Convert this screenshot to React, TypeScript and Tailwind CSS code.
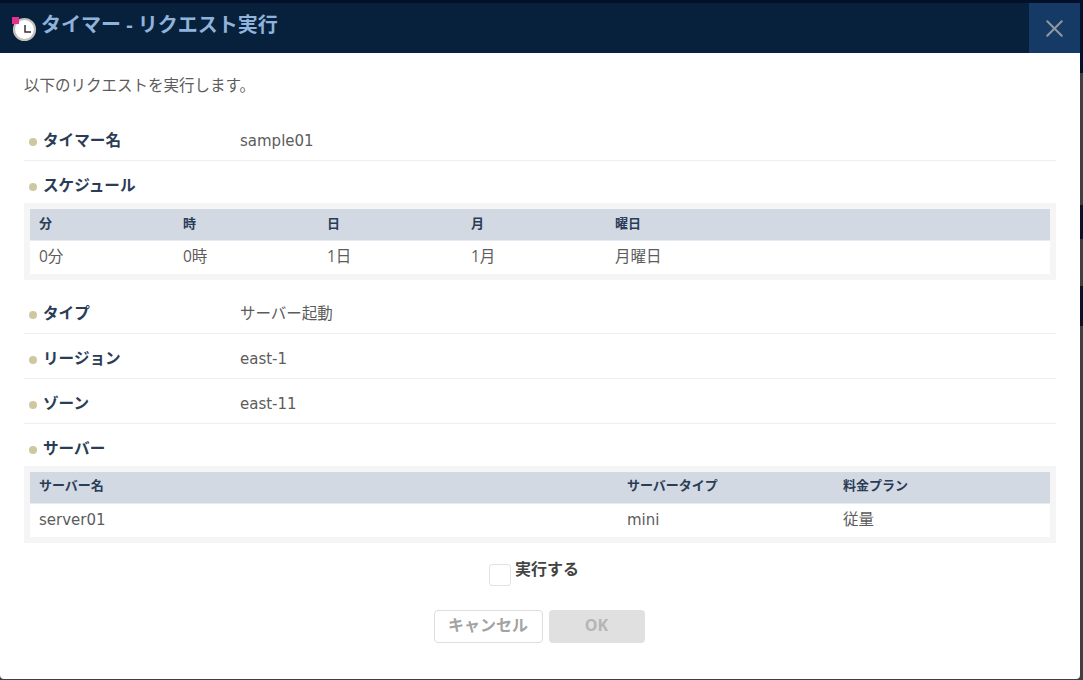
import { X } from "lucide-react";

const font = { fontFamily: '"Open Sans", "Noto Sans CJK JP", sans-serif' };
const wide = { fontFamily: '"DejaVu Sans", "Noto Sans CJK JP", sans-serif' };

function Label({ children }: { children: string }) {
  return (
    <div className="flex items-center text-[15.6px] font-bold text-[#2b3c56]">
      <span className="ml-[5px] mr-[6px] mt-[3px] h-[8px] w-[8px] rounded-full bg-[#cdc8a0]" />
      {children}
    </div>
  );
}

function Row({ label, value, latin }: { label: string; value: string; latin?: boolean }) {
  return (
    <div className="flex h-[45px] items-center border-b border-[#eeeeee] pt-[5px]">
      <div className="w-[216px]">
        <Label>{label}</Label>
      </div>
      {latin ? (
        <div className="pt-[2px] text-[15px] text-[#5c5c5c]" style={wide}>
          {value}
        </div>
      ) : (
        <div className="text-[15.5px] text-[#5c5c5c]">{value}</div>
      )}
    </div>
  );
}

function ClockIcon() {
  return (
    <svg width="25" height="25" viewBox="0 0 25 25" className="absolute left-[12px] top-[14px]">
      <circle cx="12.5" cy="12.5" r="10.5" fill="#fff" stroke="#c4c0bc" strokeWidth="2.2" />
      <path d="M13 8v7h6" fill="none" stroke="#333" strokeWidth="1.5" />
      <rect x="0" y="0" width="7" height="7" fill="#e5308f" />
    </svg>
  );
}

export default function App() {
  return (
    <div className="relative h-[680px] w-[1083px] overflow-hidden bg-[#3f3f3f] pt-[3px]" style={font}>
      {/* page behind the dialog, only a sliver shows */}
      <div className="absolute left-0 top-0 h-[3px] w-full bg-[#04102a]" />
      <div className="absolute left-[1080px] top-0 h-[73px] w-[3px] bg-[#04102a]" />
      <div className="absolute left-[1080px] top-[205px] h-[34px] w-[3px] bg-[#0a1128]" />
      <div className="absolute left-[1080px] top-[286px] h-[40px] w-[3px] bg-[#0a1128]" />

      <div className="relative h-[676px] w-[1080px] overflow-hidden rounded-b-[4px] bg-white">
        <div className="flex h-[50px] items-center justify-between bg-[#07213d]">
          <ClockIcon />
          <div className="mb-[7px] pl-[41px] text-[20px] font-bold text-[#8fb3da]">タイマー - リクエスト実行</div>
          <div className="flex h-[50px] w-[51px] items-center justify-center bg-[#153a66]">
            <X size={29} strokeWidth={1.7} className="text-[#8f979f]" />
          </div>
        </div>

        <div className="px-[24px]">
          <p className="mt-[21px] h-[23px] text-[15.5px] leading-[23px] text-[#5c5c5c]">以下のリクエストを実行します。</p>

          <div className="mt-[19px]">
            <Row label="タイマー名" value="sample01" latin />
          </div>
          <div className="flex h-[42px] items-center pt-[8px]">
            <Label>スケジュール</Label>
          </div>
          <div className="bg-[#f5f5f5] p-[6px] text-[15.5px] text-[#5c5c5c]">
            <div className="grid h-[32px] grid-cols-[144px_144px_144px_144px_1fr] items-center border-b border-[#e4ebf2] bg-[#d2d9e2] pb-[2px] pl-[9px] text-[13px] font-bold text-[#2b3c56]">
              <div>分</div>
              <div>時</div>
              <div>日</div>
              <div>月</div>
              <div>曜日</div>
            </div>
            <div className="grid h-[33px] grid-cols-[144px_144px_144px_144px_1fr] items-center bg-white pb-[2px] pl-[9px]">
              <div>0分</div>
              <div>0時</div>
              <div>1日</div>
              <div>1月</div>
              <div>月曜日</div>
            </div>
          </div>

          <div className="mt-[9px]">
            <Row label="タイプ" value="サーバー起動" />
            <Row label="リージョン" value="east-1" latin />
            <Row label="ゾーン" value="east-11" latin />
          </div>
          <div className="flex h-[42px] items-center pt-[8px]">
            <Label>サーバー</Label>
          </div>
          <div className="bg-[#f5f5f5] p-[6px] text-[15.5px] text-[#5c5c5c]">
            <div className="grid h-[32px] grid-cols-[588px_216px_1fr] items-center border-b border-[#e4ebf2] bg-[#d2d9e2] pb-[3px] pl-[9px] text-[13px] font-bold text-[#2b3c56]">
              <div>サーバー名</div>
              <div>サーバータイプ</div>
              <div>料金プラン</div>
            </div>
            <div className="grid h-[33px] grid-cols-[588px_216px_1fr] items-center bg-white pb-[2px] pl-[9px]">
              <div style={wide} className="pt-[2px] text-[15px]">server01</div>
              <div style={wide} className="pt-[2px] text-[15px]">mini</div>
              <div>従量</div>
            </div>
          </div>

          <div className="mt-[21px] flex justify-center pr-[12px]">
            <div className="flex items-start">
              <span className="h-[22px] w-[22px] rounded-[3px] border border-[#e2e2e2] bg-white" />
              <span className="ml-[4px] -mt-[7px] text-[16px] font-bold text-[#444444]">実行する</span>
            </div>
          </div>

          <div className="mt-[24px] flex justify-center gap-[6px] pr-[2px] text-[16px] font-bold">
            <button className="h-[33px] w-[109px] rounded-[4px] border border-[#dddddd] bg-white pb-[4px] text-[#a3a3a3]">キャンセル</button>
            <button className="h-[33px] w-[96px] rounded-[4px] bg-[#e0e0e0] pb-[4px] text-[#b5b5b5]">OK</button>
          </div>
        </div>
      </div>
    </div>
  );
}
